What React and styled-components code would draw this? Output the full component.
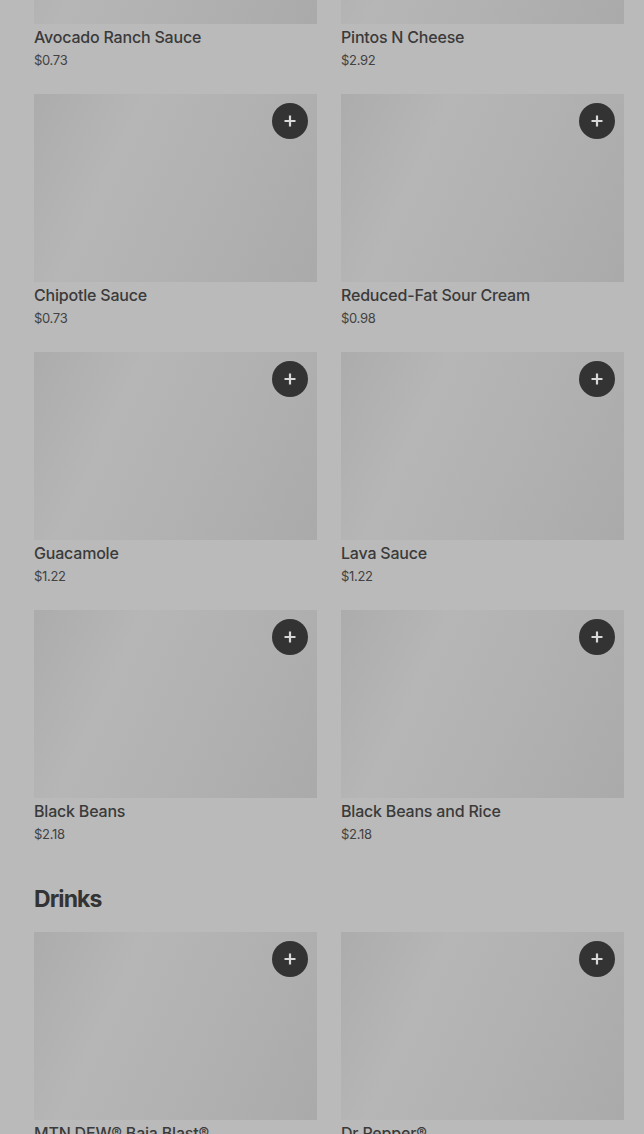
import React from "react";
import styled, { createGlobalStyle } from "styled-components";

const GlobalStyle = createGlobalStyle`
  html, body {
    margin: 0;
    padding: 0;
    background: #bababa;
    overflow: hidden;
  }
  body {
    font-family: Inter, "Noto Sans", "Liberation Sans", sans-serif;
    color: #333333;
  }
`;

const Page = styled.main`
  height: 1134px;
  overflow: hidden;
  background: #bababa;
`;

const Scroller = styled.div`
  margin-top: -164px;
  padding: 0 20px 0 34px;
`;

const Section = styled.section`
  display: flex;
  flex-direction: column;
`;

const Heading = styled.h2`
  margin: 37px 0 15px;
  font-size: 23px;
  line-height: 36px;
  font-weight: 700;
  letter-spacing: -0.9px;
  color: #333333;
`;

const Grid = styled.div`
  display: grid;
  grid-template-columns: repeat(2, 283px);
  column-gap: 24px;
  row-gap: 24px;
`;

const Card = styled.div`
  display: flex;
  flex-direction: column;
`;

const Thumb = styled.div`
  position: relative;
  height: 188px;
  background: linear-gradient(
    115deg,
    #acacac 0%,
    #b6b6b6 30%,
    #b1b1b1 62%,
    #aaaaaa 100%
  );
`;

const AddButton = styled.button`
  position: absolute;
  top: 9px;
  right: 9px;
  width: 36px;
  height: 36px;
  border: none;
  border-radius: 50%;
  padding: 0;
  background: #333333;
  color: #d8d8d8;
  display: flex;
  align-items: center;
  justify-content: center;
  cursor: pointer;
`;

const Title = styled.div`
  margin-top: 1px;
  font-size: 16px;
  line-height: 24px;
  font-weight: 500;
  letter-spacing: -0.2px;
  color: #3a3a3a;
`;

const Price = styled.div`
  margin-top: 1px;
  font-size: 13px;
  line-height: 20px;
  letter-spacing: -0.3px;
  color: #424242;
`;

const PlusIcon = () => (
  <svg width="14" height="14" viewBox="0 0 14 14" fill="none">
    <path d="M7 1.5v11M1.5 7h11" stroke="currentColor" strokeWidth="2.2" />
  </svg>
);

const sides = [
  { name: "Avocado Ranch Sauce", price: "$0.73" },
  { name: "Pintos N Cheese", price: "$2.92" },
  { name: "Chipotle Sauce", price: "$0.73" },
  { name: "Reduced-Fat Sour Cream", price: "$0.98" },
  { name: "Guacamole", price: "$1.22" },
  { name: "Lava Sauce", price: "$1.22" },
  { name: "Black Beans", price: "$2.18" },
  { name: "Black Beans and Rice", price: "$2.18" },
];

const drinks = [
  { name: "MTN DEW® Baja Blast®", price: "$2.49" },
  { name: "Dr Pepper®", price: "$2.49" },
];

const MenuItem = ({ item, showAdd }) => (
  <Card>
    <Thumb>
      {showAdd && (
        <AddButton aria-label={`Add ${item.name}`}>
          <PlusIcon />
        </AddButton>
      )}
    </Thumb>
    <Title>{item.name}</Title>
    <Price>{item.price}</Price>
  </Card>
);

const App = () => {
  return (
    <Page>
      <GlobalStyle />
      <Scroller>
        <Section>
          <Grid>
            {sides.map((item, i) => (
              <MenuItem key={item.name} item={item} showAdd={i > 1} />
            ))}
          </Grid>
        </Section>
        <Section>
          <Heading>Drinks</Heading>
          <Grid>
            {drinks.map((item) => (
              <MenuItem key={item.name} item={item} showAdd />
            ))}
          </Grid>
        </Section>
      </Scroller>
    </Page>
  );
};

export default App;
